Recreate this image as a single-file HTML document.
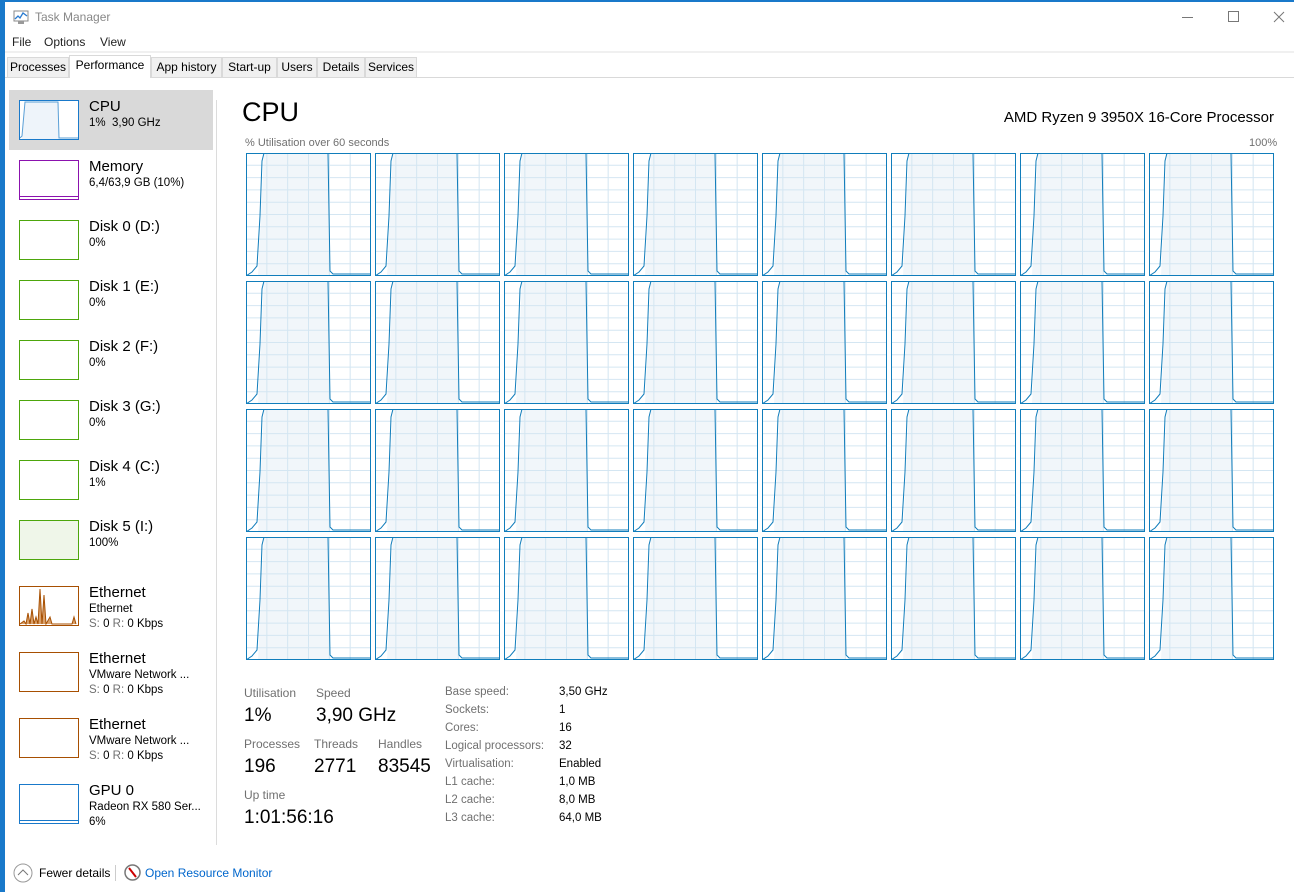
<!DOCTYPE html>
<html><head><meta charset="utf-8"><style>
*{margin:0;padding:0;box-sizing:border-box}
body{width:1294px;height:892px;position:relative;background:#fff;font-family:"Segoe UI","Liberation Sans",sans-serif;color:#000;overflow:hidden}
.a{position:absolute;white-space:nowrap}
.blue{background:#1979ca}
.tab{position:absolute;top:57px;height:20px;border:1px solid #d9d9d9;border-bottom:none;background:#f0f0f0;font-size:12px;line-height:18px;text-align:center}
.side .th{position:absolute;left:19px;width:60px;height:40px;background:#fff}
.side .t1{position:absolute;left:89px;font-size:15px}
.side .t2{position:absolute;left:89px;font-size:11.5px}
.gl{color:#707070;font-size:12px}
.bv{font-size:19px}
.rl{position:absolute;left:445px;font-size:11.5px;color:#707070}
.rv{position:absolute;left:559px;font-size:11.5px}
</style></head><body>
<div class="a blue" style="left:0;top:0;width:1294px;height:2px"></div>
<div class="a blue" style="left:0;top:0;width:5px;height:892px"></div>
<svg class="a" style="left:13px;top:10px" width="16" height="15" viewBox="0 0 16 15"><rect x="1" y="1" width="14" height="10" fill="#fff" stroke="#888"/><polyline points="2,9 5,6 7,8 10,3 14,6" fill="none" stroke="#2a7bd0" stroke-width="1.3"/><rect x="5" y="11" width="6" height="3" fill="#999"/></svg>
<div class="a" style="left:35px;top:10px;font-size:12px;color:#888">Task Manager</div>
<div class="a" style="left:1182px;top:17px;width:11px;height:1px;background:#777"></div>
<div class="a" style="left:1228px;top:11px;width:11px;height:11px;border:1px solid #777"></div>
<svg class="a" style="left:1273px;top:11px" width="12" height="12"><path d="M1 1L11 11M11 1L1 11" stroke="#777"/></svg>
<div class="a" style="left:12px;top:35px;font-size:12px;color:#222">File</div>
<div class="a" style="left:44px;top:35px;font-size:12px;color:#222">Options</div>
<div class="a" style="left:100px;top:35px;font-size:12px;color:#222">View</div>
<div class="a" style="left:5px;top:51px;width:1289px;height:2px;background:#f0f0f0"></div>
<div class="a" style="left:5px;top:77px;width:1289px;height:1px;background:#d9d9d9"></div>
<div class="tab" style="left:7px;width:62px">Processes</div>
<div class="tab" style="left:69px;top:55px;height:23px;width:82px;background:#fff">Performance</div>
<div class="tab" style="left:151px;width:71px">App history</div>
<div class="tab" style="left:222px;width:55px">Start-up</div>
<div class="tab" style="left:277px;width:40px">Users</div>
<div class="tab" style="left:317px;width:48px">Details</div>
<div class="tab" style="left:365px;width:52px">Services</div>

<div class="side">
<div class="a" style="left:9px;top:90px;width:204px;height:60px;background:#d9d9d9"></div>
<div class="a" style="left:216px;top:100px;width:1px;height:745px;background:#dcdcdc"></div>
<div id="side"></div>
</div>

<div class="a" style="left:242px;top:97px;font-size:27px">CPU</div>
<div class="a" style="left:998px;top:109px;font-size:15px;width:276px;text-align:right">AMD Ryzen 9 3950X 16-Core Processor</div>
<div class="a gl" style="left:245px;top:137px;font-size:11px">% Utilisation over 60 seconds</div>
<div class="a gl" style="left:1249px;top:137px;font-size:11px">100%</div>
<div id="grid"></div>

<div class="a gl" style="left:244px;top:686px">Utilisation</div>
<div class="a gl" style="left:316px;top:686px">Speed</div>
<div class="a bv" style="left:244px;top:705px">1%</div>
<div class="a bv" style="left:316px;top:705px">3,90 GHz</div>
<div class="a gl" style="left:244px;top:737px">Processes</div>
<div class="a gl" style="left:314px;top:737px">Threads</div>
<div class="a gl" style="left:378px;top:737px">Handles</div>
<div class="a bv" style="left:244px;top:756px">196</div>
<div class="a bv" style="left:314px;top:756px">2771</div>
<div class="a bv" style="left:378px;top:756px">83545</div>
<div class="a gl" style="left:244px;top:788px">Up time</div>
<div class="a bv" style="left:244px;top:807px">1:01:56:16</div>
<div id="rt"></div>

<svg class="a" style="left:13px;top:863px" width="20" height="20"><circle cx="10" cy="10" r="9" fill="none" stroke="#999"/><path d="M5 12L10 7L15 12" fill="none" stroke="#777"/></svg>
<div class="a" style="left:39px;top:866px;font-size:12px">Fewer details</div>
<div class="a" style="left:115px;top:865px;width:1px;height:16px;background:#ccc"></div>
<svg class="a" style="left:124px;top:864px" width="17" height="17"><circle cx="8.5" cy="8.5" r="7.5" fill="#fff" stroke="#777" stroke-width="1.5"/><path d="M5 4L12 13" stroke="#c00" stroke-width="2"/></svg>
<div class="a" style="left:145px;top:866px;font-size:12px;color:#0066cc">Open Resource Monitor</div>

<script>
var s='',items=[
['CPU','1%&nbsp; 3,90 GHz','','#1979ca',90],
['Memory','6,4/63,9 GB (10%)','','#8b12ae',150],
['Disk 0 (D:)','0%','','#4da60c',210],
['Disk 1 (E:)','0%','','#4da60c',270],
['Disk 2 (F:)','0%','','#4da60c',330],
['Disk 3 (G:)','0%','','#4da60c',390],
['Disk 4 (C:)','1%','','#4da60c',450],
['Disk 5 (I:)','100%','','#4da60c',510],
['Ethernet','Ethernet','S: 0 R: 0 Kbps','#a74f01',576],
['Ethernet','VMware Network ...','S: 0 R: 0 Kbps','#a74f01',642],
['Ethernet','VMware Network ...','S: 0 R: 0 Kbps','#a74f01',708],
['GPU 0','Radeon RX 580 Ser...','6%','#1979ca',774]];
items.forEach(function(it,i){var y=it[4];
var bg=i==7?'#eff6e9':'#fff',inner='';
if(i==0)inner='<svg width="58" height="38" style="position:absolute;left:0;top:0"><polygon points="2,38 5,1 38,1 39,38" fill="#eef4fa"/><polyline points="0,37 2,35 5,1 38,1 39,37 58,37" fill="none" stroke="#5a9fd6"/></svg>';
if(i==1)inner='<div style="position:absolute;left:0;right:0;bottom:2px;height:1px;background:#8b12ae"></div>';
if(i==8)inner='<svg width="58" height="38" style="position:absolute;left:0;top:0"><polyline points="0,37 4,34 6,37 8,26 10,37 12,22 14,37 16,30 18,37 20,2 22,37 24,8 26,37 30,30 32,37 52,37 54,30 56,37" fill="#d9a06a" stroke="#a74f01"/></svg>';
if(i==11)inner='<div style="position:absolute;left:0;right:0;bottom:2px;height:1px;background:#1979ca"></div>';
s+='<div class="th" style="top:'+(y+10)+'px;border:1px solid '+it[3]+';background:'+bg+'">'+inner+'</div>';
s+='<div class="t1" style="top:'+(y+8)+'px">'+it[0]+'</div>';
s+='<div class="t2" style="top:'+(y+27)+'px">'+it[1]+'</div>';
if(it[2])s+='<div class="t2" style="top:'+(y+42)+'px">'+(it[2][0]=='S'?'<span style="color:#707070">S:</span> 0 <span style="color:#707070">R:</span> 0 Kbps':it[2])+'</div>';
});
document.getElementById('side').innerHTML=s;
var g='';
for(var r=0;r<4;r++)for(var c=0;c<8;c++){
var x=246+c*129,y=153+r*128,w=125,h=123;
var lines='';
for(var k=1;k<10;k++)lines+='<line x1="0" x2="'+w+'" y1="'+(k*h/10)+'" y2="'+(k*h/10)+'" stroke="#d4e6f2"/>';
for(var k=1;k<6;k++)lines+='<line y1="0" y2="'+h+'" x1="'+(k*w/6)+'" x2="'+(k*w/6)+'" stroke="#d4e6f2"/>';
var pts='0,'+h+' 6,'+(h-4)+' 11,'+(h-10)+' 14,'+(h-60)+' 16,8 18,0 82,0 84,'+(h-5)+' 87,'+(h-2)+' 125,'+(h-2);
g+='<svg class="a" style="left:'+x+'px;top:'+y+'px" width="'+w+'" height="'+h+'"><polygon points="18,0 82,0 84,'+h+' 12,'+h+'" fill="#f1f6fa"/>'+lines+'<polyline points="'+pts+'" fill="none" stroke="#117dbb"/><rect x="0.5" y="0.5" width="'+(w-1)+'" height="'+(h-1)+'" fill="none" stroke="#117dbb"/></svg>';
}
document.getElementById('grid').innerHTML=g;
var rt=[['Base speed:','3,50 GHz'],['Sockets:','1'],['Cores:','16'],['Logical processors:','32'],['Virtualisation:','Enabled'],['L1 cache:','1,0 MB'],['L2 cache:','8,0 MB'],['L3 cache:','64,0 MB']],t='';
rt.forEach(function(p,i){t+='<div class="rl a" style="top:'+(686+i*18)+'px">'+p[0]+'</div><div class="rv a" style="top:'+(686+i*18)+'px">'+p[1]+'</div>';});
document.getElementById('rt').innerHTML=t;
</script>
</body></html>
